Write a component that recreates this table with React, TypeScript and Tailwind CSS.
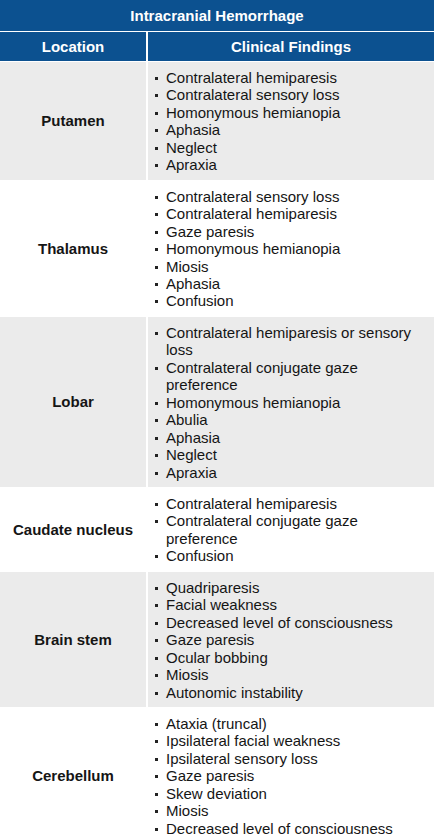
import React from "react";

const rows: { loc: string; items: string[] }[] = [
  {
    loc: "Putamen",
    items: [
      "Contralateral hemiparesis",
      "Contralateral sensory loss",
      "Homonymous hemianopia",
      "Aphasia",
      "Neglect",
      "Apraxia",
    ],
  },
  {
    loc: "Thalamus",
    items: [
      "Contralateral sensory loss",
      "Contralateral hemiparesis",
      "Gaze paresis",
      "Homonymous hemianopia",
      "Miosis",
      "Aphasia",
      "Confusion",
    ],
  },
  {
    loc: "Lobar",
    items: [
      "Contralateral hemiparesis or sensory loss",
      "Contralateral conjugate gaze preference",
      "Homonymous hemianopia",
      "Abulia",
      "Aphasia",
      "Neglect",
      "Apraxia",
    ],
  },
  {
    loc: "Caudate nucleus",
    items: [
      "Contralateral hemiparesis",
      "Contralateral conjugate gaze preference",
      "Confusion",
    ],
  },
  {
    loc: "Brain stem",
    items: [
      "Quadriparesis",
      "Facial weakness",
      "Decreased level of consciousness",
      "Gaze paresis",
      "Ocular bobbing",
      "Miosis",
      "Autonomic instability",
    ],
  },
  {
    loc: "Cerebellum",
    items: [
      "Ataxia (truncal)",
      "Ipsilateral facial weakness",
      "Ipsilateral sensory loss",
      "Gaze paresis",
      "Skew deviation",
      "Miosis",
      "Decreased level of consciousness",
    ],
  },
];

export default function App() {
  return (
    <div
      className="w-[434px] bg-white text-[#151515] text-[15px] leading-[17.45px]"
      style={{ fontFamily: '"Liberation Sans", Arial, Helvetica, sans-serif' }}
    >
      <div className="h-[31px] bg-[#0c5190] text-white font-bold flex items-center justify-center">
        Intracranial Hemorrhage
      </div>
      <div className="grid grid-cols-[146px_1fr] gap-x-[2px] mt-[1px]">
        <div className="h-[29px] bg-[#0c5190] text-white font-bold flex items-center justify-center">
          Location
        </div>
        <div className="h-[29px] bg-[#0c5190] text-white font-bold flex items-center justify-center">
          Clinical Findings
        </div>
      </div>
      <div className="grid grid-cols-[146px_1fr] gap-x-[2px] gap-y-[1px] mt-[1px]">
        {rows.map((r, i) => {
          const bg = i % 2 === 0 ? "bg-[#ebebeb]" : "bg-white";
          return (
            <React.Fragment key={r.loc}>
              <div className={`${bg} flex items-center justify-center font-bold`}>
                {r.loc}
              </div>
              <div className={`${bg} pt-[7px] pb-[6px] pr-[14px]`}>
                <ul>
                  {r.items.map((it) => (
                    <li key={it} className="flex">
                      <span className="w-[18px] shrink-0 flex justify-start pl-[7px] pt-[8px]">
                        <span className="block w-[3px] h-[3px] bg-[#222]" />
                      </span>
                      <span>{it}</span>
                    </li>
                  ))}
                </ul>
              </div>
            </React.Fragment>
          );
        })}
      </div>
    </div>
  );
}
